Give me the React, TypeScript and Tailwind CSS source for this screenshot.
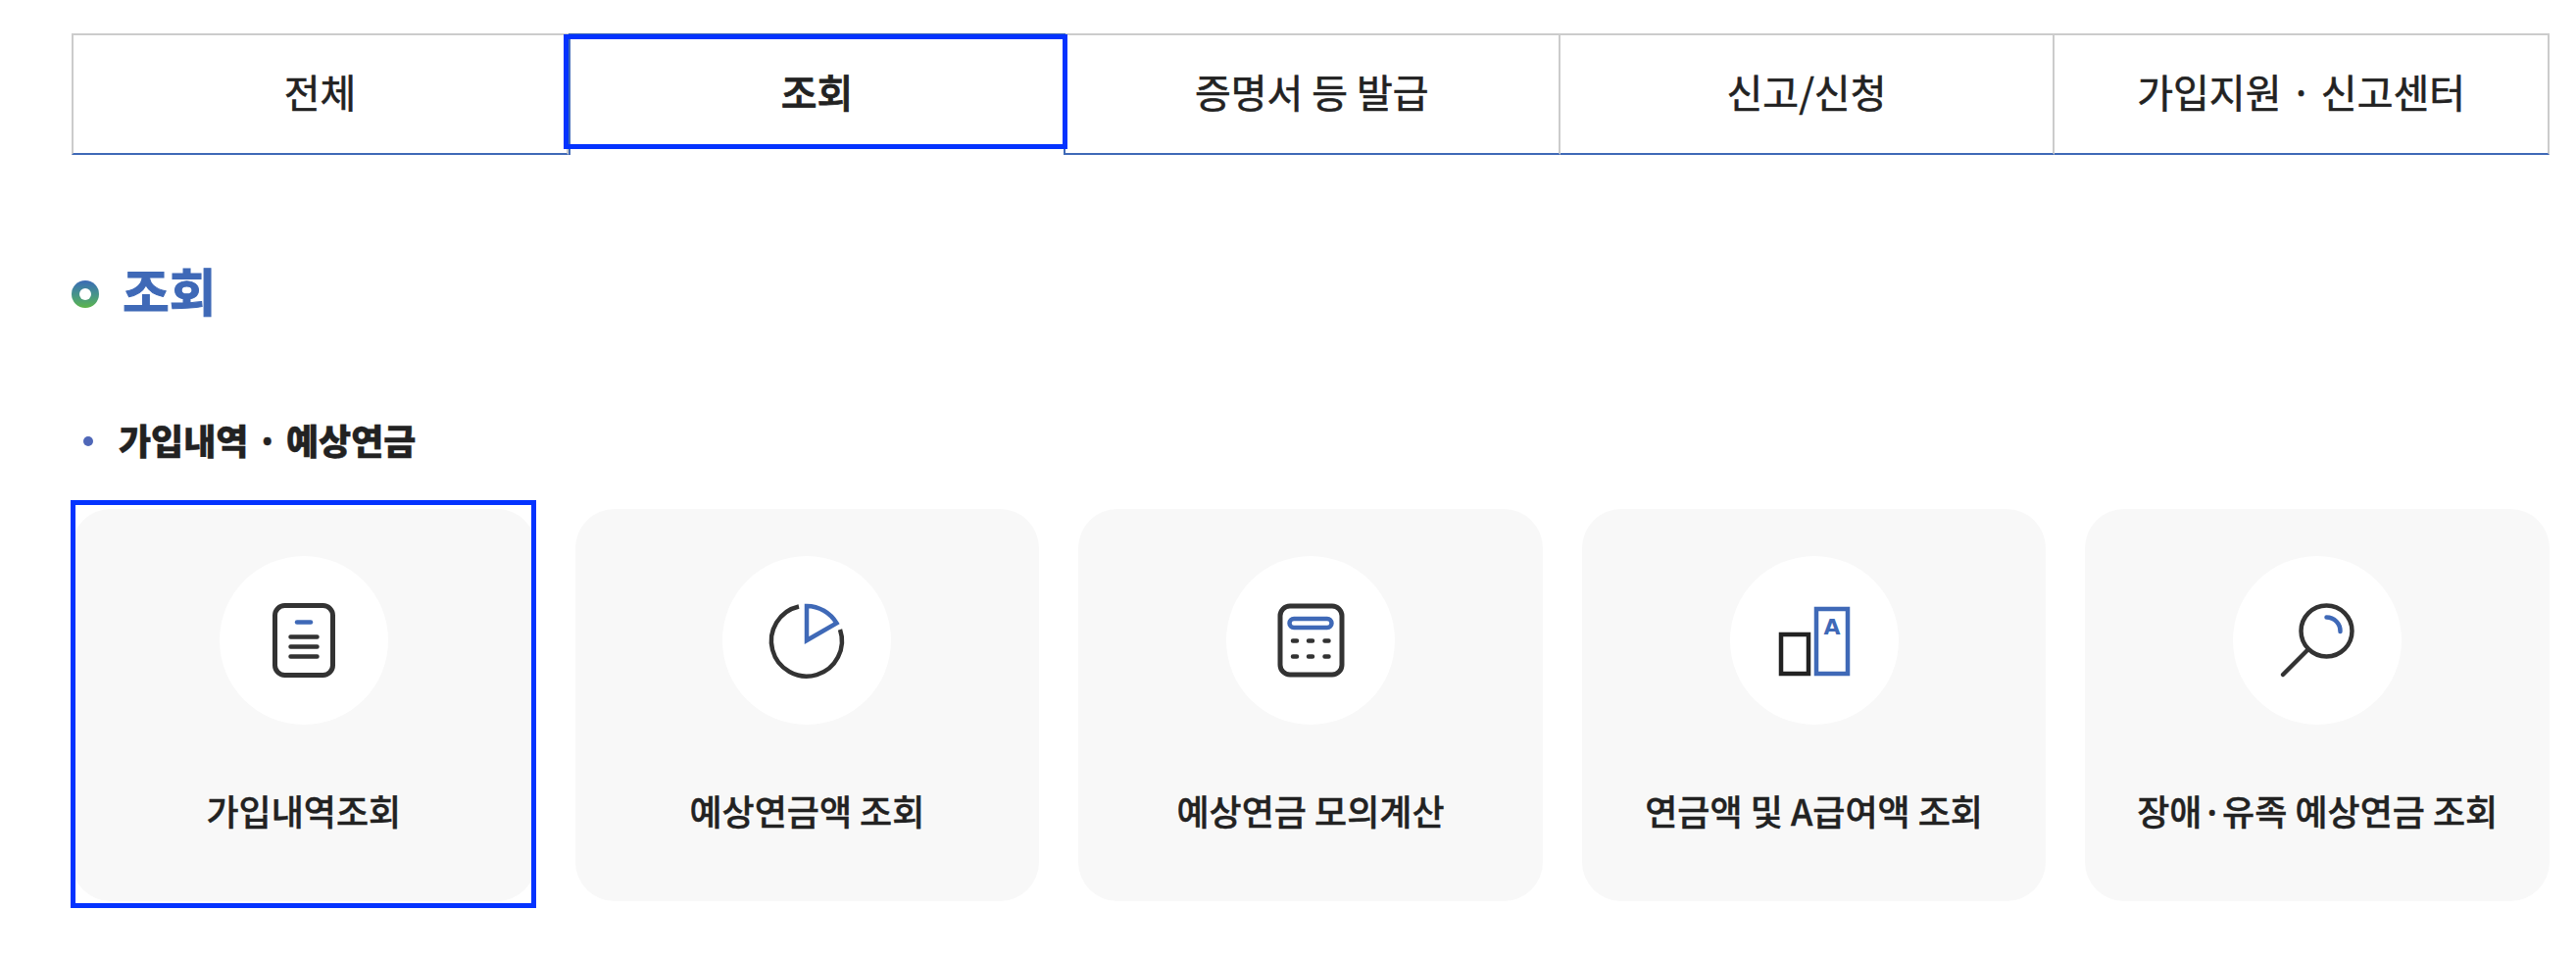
import type { ReactNode } from "react";

const INK = "#333";
const BLUE = "#3f69b7";

const TABS = ["전체", "조회", "증명서 등 발급", "신고/신청", "가입지원 · 신고센터"];
const ACTIVE_TAB = "조회";

function DocumentIcon() {
  return (
    <>
      <rect x="56.500" y="50.500" width="59" height="71" rx="10" stroke={INK} strokeWidth="5" />
      <path d="M79 67.500h14" stroke={BLUE} strokeWidth="4.5" strokeLinecap="round" />
      <path d="M72.500 82.500h27M72.500 92.500h27M72.500 102.500h27" stroke={INK} strokeWidth="4.5" strokeLinecap="round" />
    </>
  );
}

function PieIcon() {
  return (
    <>
      <path d="M78 51.500A36 36 0 1 0 120 75" stroke={INK} strokeWidth="4.5" />
      <path d="M86 51A36 36 0 0 1 116.500 68.500L86 86Z" stroke={BLUE} strokeWidth="4.5" />
    </>
  );
}

function CalculatorIcon() {
  return (
    <>
      <rect x="55" y="51" width="63" height="70" rx="10" stroke={INK} strokeWidth="5" />
      <rect x="64.500" y="64" width="43" height="9" rx="4.500" stroke={BLUE} strokeWidth="4.5" />
      <path
        d="M68 86.500h4M84 86.500h4M100.500 86.500h4M68 102.500h4M84 102.500h4M100.500 102.500h4"
        stroke={INK}
        strokeWidth="4.5"
        strokeLinecap="round"
      />
    </>
  );
}

function BarsIcon() {
  return (
    <>
      <rect x="52" y="80" width="28" height="40" stroke="#222" strokeWidth="4.5" />
      <rect x="88" y="54" width="32" height="66" stroke={BLUE} strokeWidth="4.5" />
      <text x="104" y="80" textAnchor="middle" fontSize="22" fontWeight="700" fill={BLUE} fontFamily="DejaVu Sans, sans-serif">
        A
      </text>
    </>
  );
}

function SearchIcon() {
  return (
    <>
      <circle cx="95.500" cy="76.500" r="26" stroke={INK} strokeWidth="4.5" />
      <path d="M76.500 95.500L51 121" stroke={INK} strokeWidth="4.5" strokeLinecap="round" />
      <path d="M95.500 62.500A14 14 0 0 1 109.500 77" stroke={BLUE} strokeWidth="4.5" strokeLinecap="round" />
    </>
  );
}

const CARDS: { label: string; icon: ReactNode; selected?: boolean }[] = [
  { label: "가입내역조회", icon: <DocumentIcon />, selected: true },
  { label: "예상연금액 조회", icon: <PieIcon /> },
  { label: "예상연금 모의계산", icon: <CalculatorIcon /> },
  { label: "연금액 및 A급여액 조회", icon: <BarsIcon /> },
  { label: "장애·유족 예상연금 조회", icon: <SearchIcon /> },
];

function Tab({ label }: { label: string }) {
  if (label === ACTIVE_TAB) {
    return (
      <div className="relative flex items-center justify-center border-x-2 border-t-2 border-[#3f69b7] pb-[9px] text-[40px] font-medium [-webkit-text-stroke:0.8px]">
        {label}
        <div className="absolute -left-[7px] -right-[4px] -top-[1px] h-[117px] border-[5px] border-[#0433ff]" />
      </div>
    );
  }
  return (
    <div className="flex items-center justify-center border-y-2 border-r-2 border-b-[#3f69b7] border-r-[#ccc] border-t-[#ccc] pb-[7px] text-[40px] [-webkit-text-stroke:0.6px] first:border-l-2 first:border-l-[#ccc]">
      {label}
    </div>
  );
}

export default function App() {
  return (
    <div className="h-[980px] bg-white pl-[73px] pr-[27px] pt-[34px] font-['Noto_Sans_CJK_KR',sans-serif] text-[#222]">
      {/* 탭 */}
      <div className="grid h-[124px] grid-cols-[507px_507px_1fr_1fr_1fr]">
        {TABS.map((tab) => (
          <Tab key={tab} label={tab} />
        ))}
      </div>

      {/* 제목 */}
      <div className="mt-[98px] flex items-center gap-[24px]">
        <span className="mt-[8px] flex size-[28px] items-center justify-center rounded-full bg-linear-to-b from-[#3c69b5] to-[#5db545]">
          <span className="size-[12px] rounded-full bg-white" />
        </span>
        <h2 className="text-[52px] font-bold leading-[80px] text-[#3f69b7] [-webkit-text-stroke:1px]">조회</h2>
      </div>
      <div className="mt-[82px] flex items-center pl-[12px]">
        <span className="mt-[4px] size-[10px] rounded-full bg-[#4f67b8]" />
        <h3 className="ml-[26px] text-[36px] font-black leading-[60px] [-webkit-text-stroke:0.4px]">가입내역 · 예상연금</h3>
      </div>

      {/* 카드 목록 */}
      <div className="mt-[41px] grid h-[400px] grid-cols-5 gap-[40px]">
        {CARDS.map((card) => (
          <div key={card.label} className="relative flex flex-col items-center rounded-[40px] bg-[#f8f8f8] pt-[48px]">
            <svg className="size-[172px] rounded-full bg-white" viewBox="0 0 172 172" fill="none">
              {card.icon}
            </svg>
            <p className="mt-[57px] text-[36px] font-medium leading-[60px] [-webkit-text-stroke:0.4px]">{card.label}</p>
            {card.selected && (
              <div className="absolute -bottom-[7px] -left-[1px] right-0 -top-[9px] border-[5px] border-[#0433ff]" />
            )}
          </div>
        ))}
      </div>
    </div>
  );
}
